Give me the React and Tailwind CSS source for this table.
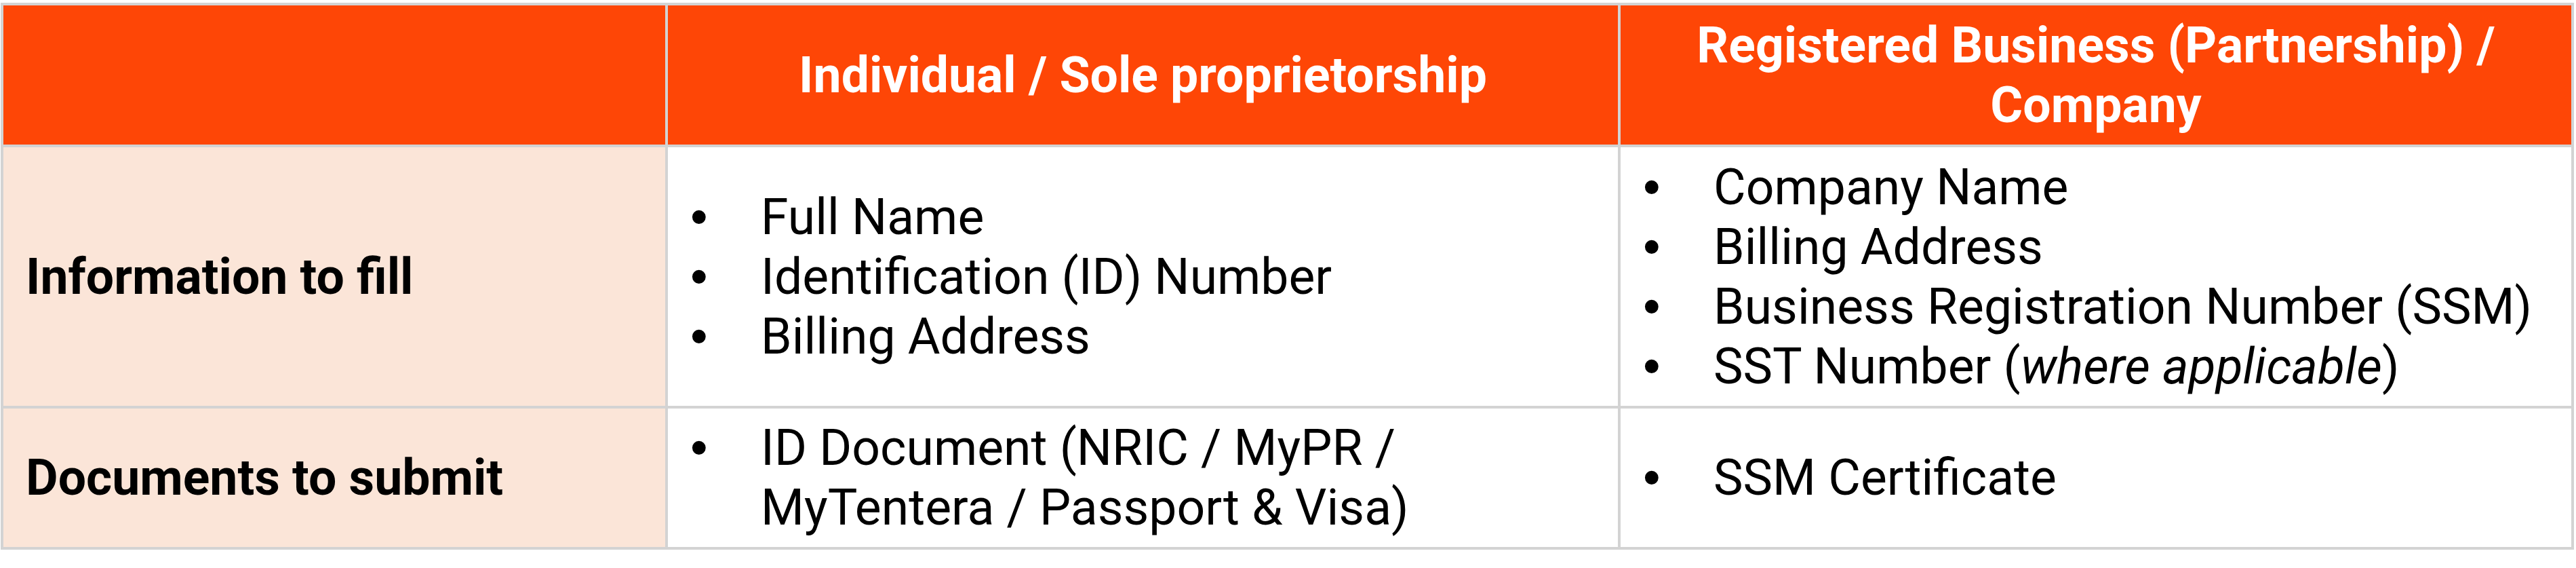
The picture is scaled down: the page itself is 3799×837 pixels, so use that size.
import React from 'react';

const Bullets = ({ items }) => (
    <ul className="w-full">
        {items.map((item, i) => (
            <li key={i} className="flex">
                <span className="w-[104px] shrink-0 font-['Liberation_Sans',Arial,sans-serif]">•</span>
                <span>{item}</span>
            </li>
        ))}
    </ul>
);

const App = () =>
{
    return (
        <div className="w-[3799px] h-[837px] bg-white pt-[4px] pl-[1px] font-['Roboto',sans-serif] text-black text-[73.3px] leading-[88px]">
            <div className="grid w-[3795px] grid-cols-[976px_1401px_1402px] grid-rows-[205px_381px_204px] gap-[4px] p-[4px] bg-[#d3d3d3]">
                {/* header row */}
                <div className="bg-[#fe4606]" />
                <div className="flex items-center justify-center bg-[#fe4606] px-[33px] text-center font-bold text-white">
                    Individual / Sole proprietorship
                </div>
                <div className="flex items-center justify-center bg-[#fe4606] px-[33px] text-center font-bold text-white">
                    Registered Business (Partnership) / Company
                </div>

                {/* information row */}
                <div className="flex items-center bg-[#fbe5d8] pl-[33px] font-bold">
                    Information to fill
                </div>
                <div className="flex items-center bg-white pl-[33px]">
                    <Bullets items={['Full Name', 'Identification (ID) Number', 'Billing Address']} />
                </div>
                <div className="flex items-center bg-white pl-[33px]">
                    <Bullets
                        items={[
                            'Company Name',
                            'Billing Address',
                            'Business Registration Number (SSM)',
                            <>SST Number (<em>where applicable</em>)</>,
                        ]}
                    />
                </div>

                {/* documents row */}
                <div className="flex items-center bg-[#fbe5d8] pl-[33px] font-bold">
                    Documents to submit
                </div>
                <div className="flex items-center bg-white pl-[33px] pr-[20px]">
                    <Bullets items={['ID Document (NRIC / MyPR / MyTentera / Passport & Visa)']} />
                </div>
                <div className="flex items-center bg-white pl-[33px]">
                    <Bullets items={['SSM Certificate']} />
                </div>
            </div>
        </div>
    );
};

export default App;
